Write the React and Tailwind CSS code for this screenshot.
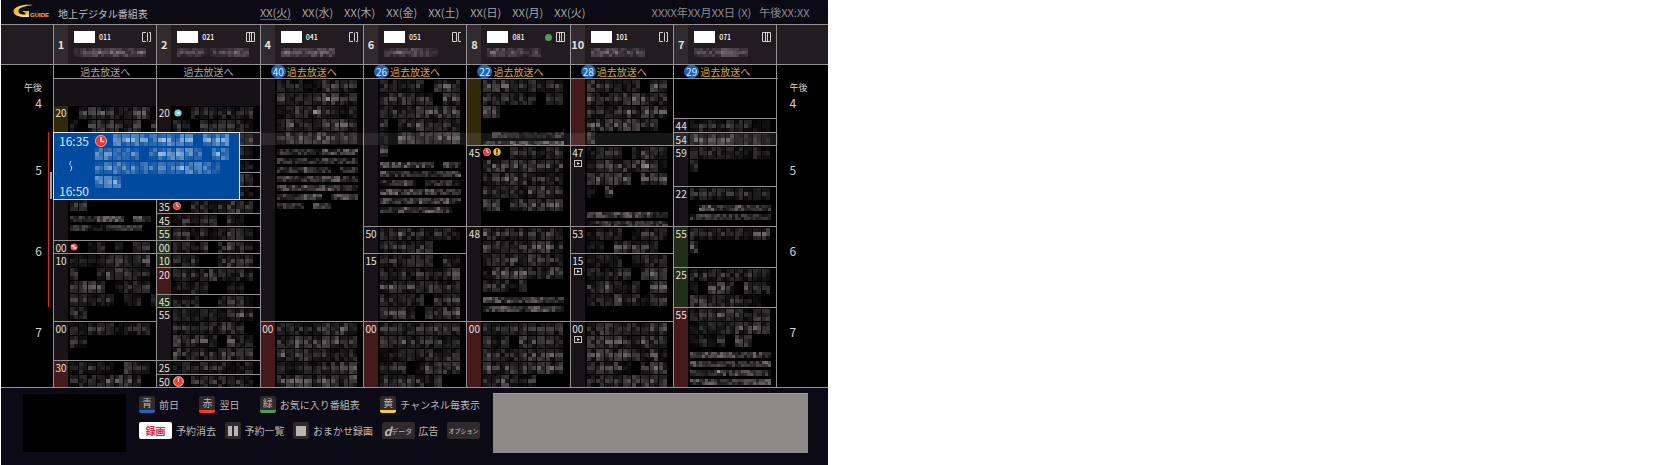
import React from "react";

const days = ["火", "水", "木", "金", "土", "日", "月", "火"];

// Each digit is the brightness of one obscured character, a space is a gap.
const channels = [
  {
    no: "1", id: "011", name: "22323323", icon: "left",
    cells: [
      { h: "h-[27px]", empty: true },
      { h: "h-[27px]", time: "20", tone: "olive", lines: [" 33322233", "1 333223 2"] },
      { h: "h-[108px]", lines: ["", "", "", "", "", "22"], small: ["222333 32", "22112222"] },
      { h: "h-[13px]", time: "00", mark: "dot", lines: ["  12 1 22"] },
      { h: "h-[68px]", time: "10", lines: ["221223223", "2  233222", "2333 1222", "22222 22 2", "22"] },
      { h: "h-[39px]", time: "00", lines: ["222221222", "22"] },
      { h: "h-[27px]", time: "30", tone: "red", lines: ["22221 322", "22223332"] },
    ],
  },
  {
    no: "2", id: "021", name: "22212233", icon: "full",
    cells: [
      { h: "h-[27px]", empty: true },
      { h: "h-[27px]", time: "20", mark: "cyan", lines: ["  2222222", "21 222221"] },
      { h: "h-[13px]", lines: ["       22"] },
      { h: "h-[14px]", lines: ["       21"] },
      { h: "h-[13px]", lines: ["       21"] },
      { h: "h-[14px]", lines: ["       32"] },
      { h: "h-[13px]", lines: ["       21"] },
      { h: "h-[14px]", time: "35", mark: "clock", lines: ["  2212332"] },
      { h: "h-[13px]", time: "45", lines: ["12122 21"] },
      { h: "h-[14px]", time: "55", tone: "green", lines: ["221212321"] },
      { h: "h-[13px]", time: "00", tone: "green", lines: ["2212 2321"] },
      { h: "h-[14px]", time: "10", tone: "green", lines: ["222  2322"] },
      { h: "h-[27px]", time: "20", tone: "red", lines: ["222232222", "1222  11"] },
      { h: "h-[13px]", time: "45", tone: "green", lines: ["222  2221"] },
      { h: "h-[53px]", time: "55", lines: ["222221232", "22222332", "32332 322", "322223322"] },
      { h: "h-[14px]", time: "25", lines: ["122222112"] },
      { h: "h-[13px]", time: "50", mark: "bigClock", lines: ["  2222221"] },
    ],
  },
  {
    no: "4", id: "041", name: "332333", icon: "left", past: "40",
    cells: [
      {
        h: "h-[243px]",
        lines: ["222113322", "322224322", "123242212", "232223332", "233333222"],
        small: ["222213333", "222223222", "222322 22", "232323322", "332333322", "22233 332", "222 33"],
      },
      { h: "h-[66px]", time: "00", tone: "red", lines: ["222223332", "224333322", "323332222", "212222333", "333323324"] },
    ],
  },
  {
    no: "6", id: "051", name: "232321", icon: "right", past: "26",
    cells: [
      {
        h: "h-[148px]",
        lines: ["22122 332", "333322 33", "222333333", "2 2232222", "1 3333333", "3"],
        small: ["333332 32", "322222223", "2232 2221", "332323222", "322332332", "22322332"],
      },
      { h: "h-[27px]", time: "50", lines: ["223221221", "222233"] },
      { h: "h-[68px]", time: "15", lines: ["222232 21", "212122223", "332333222", "22222 223", "3332 3233"] },
      { h: "h-[66px]", time: "00", tone: "red", lines: ["222222322", "333222222", "112222233", "222 13333", "2233323"] },
    ],
  },
  {
    no: "8", id: "081", name: "333212", icon: "full", past: "22", green: true,
    cells: [
      { h: "h-[67px]", tone: "olive", lines: ["333223222", "222222 22", "33"], small: ["", " 22211112", "221332333"] },
      { h: "h-[81px]", time: "45", mark: "both", lines: ["   222122", "333333233", "223332222", "222213322", "33 333333"] },
      { h: "h-[95px]", time: "48", lines: ["332222232", "333223332", "222333322", "133332233", "22213"], small: ["333233322", "233323332"] },
      { h: "h-[66px]", time: "00", tone: "red", lines: ["222222222", "212 33322", "322223332", "333333333", "223212"] },
    ],
  },
  {
    no: "10", id: "101", name: "333222", icon: "left", past: "28",
    cells: [
      { h: "h-[67px]", tone: "red", lines: ["322222 32", "322233322", "222332333", "33333322", "3"] },
      { h: "h-[81px]", time: "47", play: true, lines: ["1222 2332", "123333421", "33333 333", "1 3"], small: ["", "332333322", "122222222"] },
      { h: "h-[27px]", time: "53", lines: ["1222 1222", "11 33332"] },
      { h: "h-[68px]", time: "15", play: true, lines: ["1222 2222", "22222 333", "233212 33", "222322123"] },
      { h: "h-[66px]", time: "00", play: true, lines: ["233222233", "333322333", "333333231", "23331 233", "222233333"] },
    ],
  },
  {
    no: "7", id: "071", name: "222332", icon: "full", past: "29",
    cells: [
      { h: "h-[40px]", bare: true },
      { h: "h-[14px]", time: "44", lines: ["122222211"] },
      { h: "h-[13px]", time: "54", lines: ["333332231"] },
      { h: "h-[41px]", time: "59", lines: ["222222121", "2"] },
      { h: "h-[40px]", time: "22", lines: ["222222222"], small: [" 33223222", "232222222"] },
      { h: "h-[41px]", time: "55", tone: "green", lines: ["222222133", "3"] },
      { h: "h-[40px]", time: "25", tone: "green", lines: ["222222222", "1 332 322", "33222211"] },
      { h: "h-[80px]", time: "55", tone: "red", lines: ["222333133", "122233333", "1212 33"], small: ["333332232", "322322223", "222423322", "333232333"] },
    ],
  },
];

const tones = {
  olive: "bg-[#322909]",
  red: "bg-[#451a1c]",
  green: "bg-[#222e18]",
};

function noise(a, b) {
  const n = Math.sin(a * 127.1 + b * 311.7) * 43758.5453;
  return n - Math.floor(n);
}

function Mosaic({ text, small, name, seed = 1, big }) {
  const size = small || name ? 3 : 4;
  const rows = small ? 2 : 3;
  const cols = small || name ? 3 : 2;
  const step = 9;
  const blocks = [];
  [...text].forEach((c, i) => {
    const level = Number(c);
    if (!level) return;
    for (let x = 0; x < cols; x++) {
      for (let y = 0; y < rows; y++) {
        const r = noise(seed * 7 + i * 3 + x, y * 5 + seed + level);
        // the middle of a line carries most of the ink
        const weight = rows === 3 && y !== 1 ? 0.75 : 1.15;
        const o = (0.06 + r * 0.24) * (level / 2) * weight * (big ? 1.5 : 1);
        blocks.push(
          <rect key={`${i}-${x}-${y}`} x={i * step + x * size} y={y * size} width={size} height={size} opacity={Math.min(o, 0.8).toFixed(2)} />
        );
      }
    }
  });
  return (
    <svg
      width={text.length * step || 1}
      height={small || name ? 9 : 13}
      fill={big ? "#cfe0ee" : "#dccdd4"}
      shapeRendering="crispEdges"
      className="block shrink-0 max-w-none"
      aria-hidden="true"
    >
      {blocks}
    </svg>
  );
}

function Clock({ className }) {
  return (
    <svg viewBox="0 0 12 12" className={className} aria-hidden="true">
      <circle cx="6" cy="6" r="5.6" fill="#f0362c" stroke="#f3d9d4" strokeWidth="0.7" />
      <path d="M6 2v4.5h3.2" fill="none" stroke="#fff" strokeWidth="1.4" />
    </svg>
  );
}

function Mark({ type }) {
  if (type === "bigClock") {
    return (
      <svg viewBox="0 0 12 12" className="absolute left-[2px] top-px w-[11px] h-[11px]" aria-hidden="true">
        <circle cx="6" cy="6" r="5.3" fill="#ff3a2c" stroke="#f5e3df" strokeWidth="1" />
        <path d="M6 2.5v4" stroke="#fff" strokeWidth="1.2" />
      </svg>
    );
  }
  if (type === "cyan") {
    return (
      <svg viewBox="0 0 8 8" className="absolute left-[3px] top-[3px] w-[8px] h-[8px]" aria-hidden="true">
        <circle cx="4" cy="4" r="3.6" fill="#83d3d6" />
        <rect x="3.5" y="3" width="2" height="2" fill="#e9ffff" />
      </svg>
    );
  }
  if (type === "dot") {
    return (
      <svg viewBox="0 0 8 8" className="absolute left-[2px] top-[2px] w-[8px] h-[8px]" aria-hidden="true">
        <circle cx="4" cy="4" r="3.6" fill="#ee5248" />
        <path d="M1.5 3h3M3.5 5h3" stroke="#fff" strokeWidth="1.4" />
      </svg>
    );
  }
  return (
    <>
      <Clock className="absolute left-[2px] top-[2px] w-[8px] h-[8px]" />
      {type === "both" && (
        <svg viewBox="0 0 8 8" className="absolute left-[12px] top-[2px] w-[8px] h-[8px]" aria-hidden="true">
          <circle cx="4" cy="4" r="3.7" fill="#f6c433" />
          <path d="M4 1.2v3.6M4 5.6v1.2" stroke="#1c1400" strokeWidth="1.4" />
        </svg>
      )}
    </>
  );
}

function Cell({ cell, seed }) {
  if (cell.empty) return <div className={`${cell.h} bg-[#151115]`}></div>;
  if (cell.bare) return <div className={`${cell.h} border-b border-[#959091]`}></div>;
  return (
    <div className={`${cell.h} flex border-b border-[#959091]`}>
      <div className={`w-[14px] shrink-0 flex flex-col items-center ${tones[cell.tone] || "bg-[#171317]"}`}>
        <span className="text-[10px] leading-[14px] text-[#e4e0dc]">{cell.time}</span>
        {cell.play && (
          <svg viewBox="0 0 8 7" className="w-[8px] h-[7px] shrink-0" aria-hidden="true">
            <rect x="0.5" y="0.5" width="7" height="6" fill="none" stroke="#c9c5c2" />
            <path d="M3 2l3 1.5L3 5z" fill="#e4e0dc" />
          </svg>
        )}
      </div>
      <div className="relative flex-1 min-w-0 overflow-hidden pl-[2px] pt-px">
        {cell.mark && <Mark type={cell.mark} />}
        {cell.lines.map((l, i) => (
          <Mosaic key={i} text={l} seed={seed * 13 + i} />
        ))}
        {cell.small && (
          <div className="pt-[4px]">
            {cell.small.map((l, i) => (
              <Mosaic key={i} text={l} small seed={seed * 17 + i} />
            ))}
          </div>
        )}
      </div>
    </div>
  );
}

function BlockIcon({ type }) {
  return (
    <svg viewBox="0 0 9 10" className="w-[9px] h-[10px]" fill="none" stroke="#d6d1cf" aria-hidden="true">
      {type === "full" && <path d="M0.5 0.5h8v9h-8zM3.5 0.5v9M5.5 0.5v9" />}
      {type === "left" && <path d="M4 0.5H0.5v9H4M5.5 0.5v9M7 0.5h1.5v9H7" />}
      {type === "right" && <path d="M0.5 0.5h4v9h-4zM9 0.5H6.5v9H9" />}
    </svg>
  );
}

function ChannelHead({ ch, seed }) {
  return (
    <div className="flex border-r border-[#959091] min-w-0">
      <div className="w-[14px] shrink-0 bg-[#312a2f] flex items-center justify-center text-[11px] font-bold text-[#e4e0dc]">
        {ch.no}
      </div>
      <div className="flex-1 min-w-0 pl-[6px] pt-[6px]">
        <div className="flex items-center h-[12px] pr-[5px]">
          <div className="w-[21px] h-[12px] bg-white"></div>
          <span className="text-[7px] leading-[12px] font-medium text-white ml-1">{ch.id}</span>
          <div className="ml-auto flex items-center gap-1">
            {ch.green && <span className="w-[7px] h-[7px] rounded-full bg-[#4f9a63]"></span>}
            <BlockIcon type={ch.icon} />
          </div>
        </div>
        <div className="pt-[5px] overflow-hidden">
          <Mosaic text={ch.name} name seed={seed} />
        </div>
      </div>
    </div>
  );
}

function Hours({ className }) {
  return (
    <div className={`flex flex-col text-[#d8d4d2] ${className}`}>
      <span className="text-[9px] leading-[13px]">午後</span>
      {["4", "5", "6", "7"].map((h, i) => (
        <span key={h} className={`text-[12px] leading-[13px] ${i === 0 ? "mt-[2px]" : i === 1 ? "mt-[54px]" : "mt-[68px]"}`}>
          {h}
        </span>
      ))}
    </div>
  );
}

function Key({ children, bar, wide, white }) {
  return (
    <span
      className={`${wide ? "w-[33px]" : "w-4"} ${bar ? `border-b-[3px] ${bar}` : ""} ${
        white ? "bg-white text-[#dc2440] font-bold" : "bg-[#30292d] text-[#b9b5b3]"
      } h-[17px] rounded-[2px] flex items-center justify-center text-[10px] leading-[14px]`}
    >
      {children}
    </span>
  );
}

function KeyButton({ label, ...rest }) {
  return (
    <button className="flex items-center gap-1 text-[10px] leading-[17px] text-[#bcb8b6] whitespace-nowrap">
      <Key {...rest} />
      {label}
    </button>
  );
}

function Logo() {
  return (
    <svg width="37" height="16" viewBox="0 0 37 16" role="img" aria-label="G-GUIDE">
      <defs>
        <linearGradient id="gold" x1="0" y1="0" x2="0" y2="1">
          <stop offset="0" stopColor="#ffd84a" />
          <stop offset="0.6" stopColor="#f2b13a" />
          <stop offset="1" stopColor="#ffe9a0" />
        </linearGradient>
      </defs>
      <path
        d="M20 1C9 0 1 3 .5 7c-.3 4 5 6.500 15.500 6V7H9.500l1.500 1.500h1.500v2C8 11 5 9 5.500 6.500 6 3.500 12 2 20 1z"
        fill="url(#gold)"
      />
      <text x="17" y="13" fontSize="6" fontWeight="700" fontFamily="'Liberation Sans', sans-serif" fill="#f5b942">
        GUIDE
      </text>
    </svg>
  );
}

function App() {
  return (
    <div className="w-full bg-white pl-px font-['Noto_Sans_CJK_JP','Noto_Sans',sans-serif]">
      <div className="w-1/2 bg-[#0c0a14] flex flex-col">
        <header className="h-[25px] border-b border-[#959091] flex items-center pl-3 pr-[18px] whitespace-nowrap">
          <Logo />
          <h1 className="text-[10px] text-[#c4c0be] ml-2 w-[202px] pt-[3px]">地上デジタル番組表</h1>
          <nav className="flex gap-[11px] text-[11px] leading-[14px] text-[#aaa6a5]">
            {days.map((d, i) => (
              <button key={i} className={`border-b ${i === 0 ? "border-[#1f6fc0]" : "border-transparent"}`}>
                XX({d})
              </button>
            ))}
          </nav>
          <p className="ml-auto text-[11px] leading-[14px] text-[#8f8b8c] flex gap-2">
            <span>XXXX年XX月XX日 (X)</span>
            <span>午後XX:XX</span>
          </p>
        </header>

        <div className="h-[40px] border-b border-[#959091] bg-[#221c20] flex">
          <div className="w-[53px] border-r border-[#959091]"></div>
          <div className="flex-1 grid grid-cols-7">
            {channels.map((ch, i) => (
              <ChannelHead key={ch.id} ch={ch} seed={i + 3} />
            ))}
          </div>
          <div className="w-[50px]"></div>
        </div>

        <main className="bg-black flex border-b border-[#959091]">
          <div className="w-[53px] border-r border-[#959091] flex justify-end pr-px">
            <Hours className="items-end pt-[16px]" />
            <div className="ml-[6px] mt-[67px] w-px h-[175px] bg-[#e0281e]"></div>
            <div className="ml-px mt-[107px] w-[2px] h-[27px] bg-[#6fb9c4]"></div>
          </div>

          <div className="flex-1 min-w-0 relative">
            <div className="grid grid-cols-7 h-[14px] border-b border-[#959091]">
              {channels.map((ch) => (
                <button
                  key={ch.id}
                  className={`flex items-center h-[13px] text-[10px] leading-[13px] whitespace-nowrap border-r border-[#959091] ${
                    ch.past ? "pl-[10px] text-[#d9a531]" : "justify-center text-[#aaa6a4]"
                  }`}
                >
                  {ch.past && (
                    <span className="w-[15px] h-[13px] rounded-full bg-[#1b66b4] text-[#dfeaf5] text-center mr-px">{ch.past}</span>
                  )}
                  過去放送へ
                </button>
              ))}
            </div>

            <div className="grid grid-cols-7 h-[308px]">
              {channels.map((ch, c) => (
                <div key={ch.id} className="border-r border-[#959091] min-w-0">
                  {ch.cells.map((cell, i) => (
                    <Cell key={i} cell={cell} seed={c * 20 + i + 1} />
                  ))}
                </div>
              ))}
            </div>

            {/* current slot band, behind the selected program */}
            <div className="absolute left-0 right-0 top-[68px] h-[12px] bg-[#e6d8e6]/10 pointer-events-none"></div>

            <button className="absolute -left-px top-[67px] w-[187px] h-[68px] bg-[#004a9f] border border-[#dfe9e4] flex text-left">
              <span className="w-[41px] h-full shrink-0 pl-[5px] flex flex-col justify-between text-[12px] leading-[16px] text-[#d9e6f2]">
                <span>16:35</span>
                <svg viewBox="0 0 4 10" className="ml-[10px] w-[4px] h-[10px]" aria-hidden="true">
                  <path d="M2 0C0 3 1 4 2 5s1 3-.5 5" fill="none" stroke="#d9e6f2" />
                </svg>
                <span>16:50</span>
              </span>
              <Clock className="absolute left-[41px] top-[2px] w-[12px] h-[12px]" />
              <span className="flex flex-col gap-px pt-px">
                <Mosaic text="  333323333 333" seed={3} big />
                <Mosaic text="33222 233332 33" seed={8} big />
                <Mosaic text="23332222233321" seed={14} big />
                <Mosaic text="333" seed={21} big />
              </span>
            </button>
          </div>

          <div className="w-[50px] pl-3">
            <Hours className="items-start pt-[16px]" />
          </div>
        </main>

        <footer className="h-[77px] flex items-start pt-[5px] pl-[22px] pr-[20px]">
          <div className="w-[103px] h-[58px] mt-px bg-black shrink-0"></div>
          <div className="w-[341px] ml-[13px] mt-[3px] shrink-0 flex flex-col gap-[9px]">
            <div className="flex justify-between">
              <KeyButton bar="border-[#1a66b8]" label="前日">青</KeyButton>
              <KeyButton bar="border-[#f43d2c]" label="翌日">赤</KeyButton>
              <KeyButton bar="border-[#4f9a63]" label="お気に入り番組表">緑</KeyButton>
              <KeyButton bar="border-[#fccb35]" label="チャンネル毎表示">黄</KeyButton>
            </div>
            <div className="flex justify-between">
              <KeyButton wide white label="予約消去">録画</KeyButton>
              <KeyButton label="予約一覧">
                <svg viewBox="0 0 10 10" className="w-[10px] h-[10px]" fill="#b9b5b3" aria-hidden="true">
                  <path d="M0 0h4v10H0zM6 0h4v10H6z" />
                </svg>
              </KeyButton>
              <KeyButton label="おまかせ録画">
                <svg viewBox="0 0 10 10" className="w-[10px] h-[10px]" fill="#b9b5b3" aria-hidden="true">
                  <path d="M0 0h10v10H0z" />
                </svg>
              </KeyButton>
              <KeyButton wide label="広告">
                <i className="text-[12px] font-bold">d</i>
                <span className="text-[7px]">データ</span>
              </KeyButton>
              <button>
                <Key wide>
                  <span className="text-[6px] font-medium whitespace-nowrap">オプション</span>
                </Key>
              </button>
            </div>
          </div>
          <div className="flex-1 ml-[13px] h-[60px] bg-[#8d8989] border-t border-[#a19d9d]"></div>
        </footer>
      </div>
    </div>
  );
}

export default App;
